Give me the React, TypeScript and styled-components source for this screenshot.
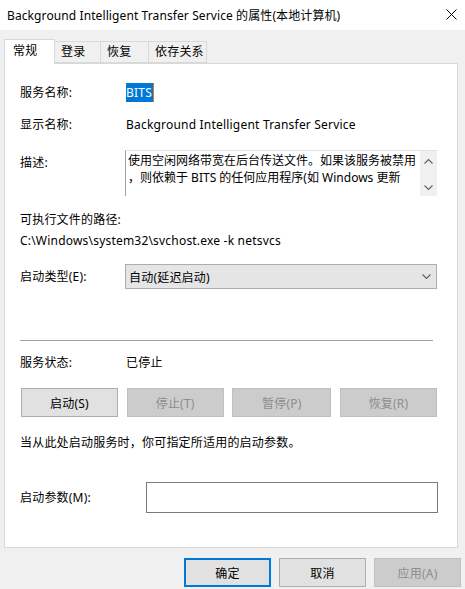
import React from "react";
import styled, { createGlobalStyle } from "styled-components";

const GlobalStyle = createGlobalStyle`
  html, body {
    margin: 0;
    padding: 0;
    background: #f0f0f0;
  }
  body {
    font-family: "Noto Sans", "Noto Sans CJK SC", sans-serif;
    font-size: 12px;
    letter-spacing: 0.2px;
    color: #000;
  }
`;

const tabs = [
  { name: "常规", width: 51 },
  { name: "登录", width: 47 },
  { name: "恢复", width: 49 },
  { name: "依存关系", width: 59 },
];

const serviceButtons = [
  { label: "启动(S)", width: 97, disabled: false },
  { label: "停止(T)", width: 97, disabled: true },
  { label: "暂停(P)", width: 99, disabled: true },
  { label: "恢复(R)", width: 97, disabled: true },
];

const Chevron = ({ up }: { up?: boolean }) => (
  <svg width="9" height="6" viewBox="0 0 9 6">
    <path
      d={up ? "M0.5 5.5 L4.5 1.5 L8.5 5.5" : "M0.5 0.5 L4.5 4.5 L8.5 0.5"}
      fill="none"
      stroke="#606060"
      strokeWidth="1.1"
    />
  </svg>
);

export default function App() {
  return (
    <>
      <GlobalStyle />
      <Window>
        <TitleBar>
          <Title>Background Intelligent Transfer Service 的属性(本地计算机)</Title>
          <CloseButton>
            <svg width="11" height="11" viewBox="0 0 11 11">
              <path d="M0.5 0.5 L10.5 10.5 M10.5 0.5 L0.5 10.5" stroke="#000" strokeWidth="1" />
            </svg>
          </CloseButton>
        </TitleBar>

        <Body>
          <TabStrip>
            {tabs.map((t, i) => (
              <Tab key={t.name} $active={i === 0} $width={t.width}>
                {t.name}
              </Tab>
            ))}
          </TabStrip>

          <Panel>
            <FieldRow $top={19} $height={20}>
              <Label>服务名称:</Label>
              <Value>
                <Selected>BITS</Selected>
              </Value>
            </FieldRow>

            <FieldRow $top={12} $height={20}>
              <Label>显示名称:</Label>
              <Value>Background Intelligent Transfer Service</Value>
            </FieldRow>

            <FieldRow $top={15} $height={46} $alignTop>
              <Label $pad={5}>描述:</Label>
              <DescBox>
                <DescText>
                  使用空闲网络带宽在后台传送文件。如果该服务被禁用
                  <br />
                  ，则依赖于 BITS 的任何应用程序(如 Windows 更新
                </DescText>
                <ScrollBar>
                  <Chevron up />
                  <Chevron />
                </ScrollBar>
              </DescBox>
            </FieldRow>

            <TextRow $top={14}>可执行文件的路径:</TextRow>
            <TextRow $top={1}>C:\Windows\system32\svchost.exe -k netsvcs</TextRow>

            <FieldRow $top={13} $height={25}>
              <Label>启动类型(E):</Label>
              <Combo>
                <span>自动(延迟启动)</span>
                <Chevron />
              </Combo>
            </FieldRow>

            <Separator />

            <FieldRow $top={12} $height={20}>
              <Label>服务状态:</Label>
              <Value>已停止</Value>
            </FieldRow>

            <ButtonRow>
              {serviceButtons.map((b) => (
                <ActionButton key={b.label} $width={b.width} $disabled={b.disabled}>
                  {b.label}
                </ActionButton>
              ))}
            </ButtonRow>

            <TextRow $top={16}>当从此处启动服务时，你可指定所适用的启动参数。</TextRow>

            <ParamRow>
              <Label>启动参数(M):</Label>
              <ParamInput />
            </ParamRow>
          </Panel>

          <Footer>
            <ActionButton $width={87} $primary>
              确定
            </ActionButton>
            <ActionButton $width={87}>取消</ActionButton>
            <ActionButton $width={87} $disabled>
              应用(A)
            </ActionButton>
          </Footer>
        </Body>
      </Window>
    </>
  );
}

const Window = styled.div`
  width: 465px;
  height: 589px;
  display: flex;
  flex-direction: column;
  background: #f0f0f0;
  overflow: hidden;
`;

const TitleBar = styled.div`
  height: 30px;
  flex: none;
  background: #fff;
  display: flex;
  align-items: center;
  justify-content: space-between;
  padding: 0 8px 0 7px;
`;

const Title = styled.div`
  font-size: 12px;
  letter-spacing: 0.1px;
  white-space: nowrap;
  padding-bottom: 1px;
`;

const CloseButton = styled.div`
  display: flex;
  align-items: center;
  padding-bottom: 2px;
`;

const Body = styled.div`
  flex: 1;
  padding: 9px 0 0 4px;
  display: flex;
  flex-direction: column;
`;

const TabStrip = styled.div`
  display: flex;
  align-items: flex-end;
  height: 24px;
  position: relative;
  z-index: 1;
`;

const Tab = styled.div<{ $active?: boolean; $width: number }>`
  box-sizing: border-box;
  width: ${(p) => p.$width}px;
  height: ${(p) => (p.$active ? 25 : 22)}px;
  margin-bottom: ${(p) => (p.$active ? -1 : 0)}px;
  margin-right: -1px;
  padding-left: ${(p) => (p.$active ? 8 : 6)}px;
  padding-top: ${(p) => (p.$active ? 3 : 2)}px;
  background: ${(p) => (p.$active ? "#fff" : "#f0f0f0")};
  border: 1px solid #d9d9d9;
  border-bottom: ${(p) => (p.$active ? "none" : "1px solid #d9d9d9")};
  font-size: 12px;
  line-height: 16px;
  white-space: nowrap;
`;

const Panel = styled.div`
  box-sizing: border-box;
  width: 454px;
  height: 485px;
  background: #fff;
  border: 1px solid #d9d9d9;
  padding: 0 20px 0 15px;
  display: flex;
  flex-direction: column;
`;

const FieldRow = styled.div<{ $top: number; $height: number; $alignTop?: boolean }>`
  margin-top: ${(p) => p.$top}px;
  height: ${(p) => p.$height}px;
  display: grid;
  grid-template-columns: 105px 1fr;
  align-items: ${(p) => (p.$alignTop ? "start" : "center")};
`;

const Label = styled.div<{ $pad?: number }>`
  padding-top: ${(p) => p.$pad ?? 0}px;
  line-height: 16px;
  white-space: nowrap;
`;

const Value = styled.div`
  padding-left: 1px;
  line-height: 16px;
  white-space: nowrap;
`;

const Selected = styled.span`
  background: #0078d7;
  color: #fff;
  padding: 1px 1px 1px 0;
  border-right: 1px solid #f07000;
`;

const TextRow = styled.div<{ $top: number }>`
  margin-top: ${(p) => p.$top}px;
  height: 20px;
  line-height: 20px;
  white-space: nowrap;
`;

const DescBox = styled.div`
  box-sizing: border-box;
  height: 46px;
  width: 312px;
  border-left: 1px solid #a0a0a0;
  border-top: 1px solid #e3e3e3;
  display: flex;
  background: #fff;
`;

const DescText = styled.div`
  flex: 1;
  padding: 1px 0 0 2px;
  line-height: 17px;
  letter-spacing: 0;
  white-space: nowrap;
  overflow: hidden;
`;

const ScrollBar = styled.div`
  width: 17px;
  flex: none;
  background: #f0f0f0;
  display: flex;
  flex-direction: column;
  align-items: center;
  justify-content: space-between;
  padding: 7px 0 5px;
  box-sizing: border-box;
`;

const Combo = styled.div`
  box-sizing: border-box;
  height: 25px;
  width: 312px;
  background: #e5e5e5;
  border: 1px solid #adadad;
  display: flex;
  align-items: center;
  justify-content: space-between;
  padding: 0 5px 0 3px;
`;

const Separator = styled.div`
  margin-top: 51px;
  height: 1px;
  width: 413px;
  background: #a0a0a0;
`;

const ButtonRow = styled.div`
  margin-top: 15px;
  display: flex;
  justify-content: space-between;
  padding-left: 1px;
`;

const ActionButton = styled.div<{ $width: number; $disabled?: boolean; $primary?: boolean }>`
  box-sizing: border-box;
  width: ${(p) => p.$width}px;
  height: 29px;
  display: flex;
  align-items: center;
  justify-content: center;
  background: ${(p) => (p.$disabled ? "#cccccc" : "#e1e1e1")};
  border: ${(p) =>
    p.$primary ? "2px solid #0078d7" : p.$disabled ? "1px solid #bfbfbf" : "1px solid #adadad"};
  color: ${(p) => (p.$disabled ? "#8d8d8d" : "#000")};
  white-space: nowrap;
`;

const ParamRow = styled.div`
  margin-top: 29px;
  height: 31px;
  display: grid;
  grid-template-columns: 126px 1fr;
  align-items: center;
`;

const ParamInput = styled.div`
  box-sizing: border-box;
  width: 292px;
  height: 31px;
  border: 1px solid #7a7a7a;
  background: #fff;
`;

const Footer = styled.div`
  margin-top: 10px;
  display: flex;
  justify-content: flex-end;
  gap: 8px;
  padding-right: 4px;
`;
